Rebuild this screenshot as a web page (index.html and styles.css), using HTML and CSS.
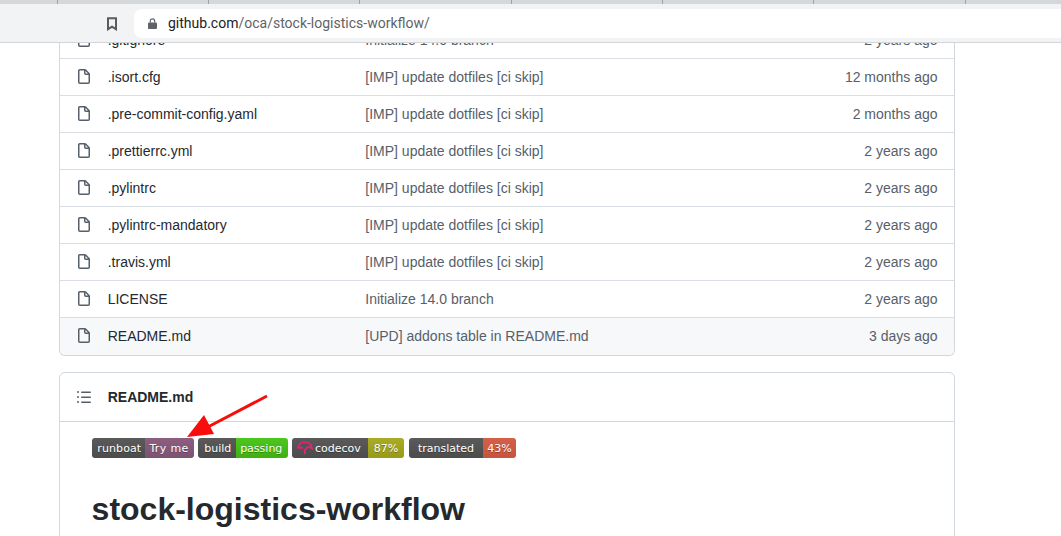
FILE: index.html
```html
<!DOCTYPE html>
<html lang="en">
<head>
<meta charset="utf-8">
<title>oca/stock-logistics-workflow</title>
<link rel="stylesheet" href="styles.css">
</head>
<body>
<svg class="defs" width="0" height="0" aria-hidden="true">
  <symbol id="file" viewBox="0 0 16 16"><path fill="#57606a" fill-rule="evenodd" d="M3.75 1.5a.25.25 0 00-.25.25v11.5c0 .138.112.25.25.25h8.5a.25.25 0 00.25-.25V6H9.75A1.75 1.75 0 018 4.25V1.5H3.75zm5.75.56v2.19c0 .138.112.25.25.25h2.19L9.5 2.06zM2 1.75C2 .784 2.784 0 3.75 0h5.086c.464 0 .909.184 1.237.513l3.414 3.414c.329.328.513.773.513 1.237v8.086A1.75 1.75 0 0112.25 15h-8.5A1.75 1.75 0 012 13.25V1.75z"/></symbol>
</svg>
<div class="tabstrip">
  <span class="tab tab-first"></span><span class="tab"></span><span class="tab"></span><span class="tab"></span><span class="tab"></span><span class="tab"></span><span class="tab"></span>
</div>
<header class="toolbar">
  <svg class="bookmark" width="12" height="14" viewBox="0 0 12 14"><path fill="none" stroke="#5a5c60" stroke-width="2" d="M2 1.2h8v11l-4-2.600-4 2.600z"/></svg>
  <div class="urlbar">
    <svg class="lock" width="9" height="11" viewBox="0 0 10 12"><path fill="#5f6368" d="M1 5h8a1 1 0 011 1v5a1 1 0 01-1 1H1a1 1 0 01-1-1V6a1 1 0 011-1z"/><path fill="none" stroke="#5f6368" stroke-width="1.3" d="M2.600 5V3.200a2.400 2.400 0 014.800 0V5"/></svg>
    <span class="url"><span class="host">github.com</span>/oca/stock-logistics-workflow/</span>
  </div>
</header>
<div class="viewport">
  <main class="content">
    <section class="files">
      <div class="row"><svg class="ficon" width="16" height="16"><use href="#file"/></svg><span class="name">.gitignore</span><span class="msg">Initialize 14.0 branch</span><span class="age">2 years ago</span></div>
      <div class="row"><svg class="ficon" width="16" height="16"><use href="#file"/></svg><span class="name">.isort.cfg</span><span class="msg">[IMP] update dotfiles [ci skip]</span><span class="age">12 months ago</span></div>
      <div class="row"><svg class="ficon" width="16" height="16"><use href="#file"/></svg><span class="name">.pre-commit-config.yaml</span><span class="msg">[IMP] update dotfiles [ci skip]</span><span class="age">2 months ago</span></div>
      <div class="row"><svg class="ficon" width="16" height="16"><use href="#file"/></svg><span class="name">.prettierrc.yml</span><span class="msg">[IMP] update dotfiles [ci skip]</span><span class="age">2 years ago</span></div>
      <div class="row"><svg class="ficon" width="16" height="16"><use href="#file"/></svg><span class="name">.pylintrc</span><span class="msg">[IMP] update dotfiles [ci skip]</span><span class="age">2 years ago</span></div>
      <div class="row"><svg class="ficon" width="16" height="16"><use href="#file"/></svg><span class="name">.pylintrc-mandatory</span><span class="msg">[IMP] update dotfiles [ci skip]</span><span class="age">2 years ago</span></div>
      <div class="row"><svg class="ficon" width="16" height="16"><use href="#file"/></svg><span class="name">.travis.yml</span><span class="msg">[IMP] update dotfiles [ci skip]</span><span class="age">2 years ago</span></div>
      <div class="row"><svg class="ficon" width="16" height="16"><use href="#file"/></svg><span class="name">LICENSE</span><span class="msg">Initialize 14.0 branch</span><span class="age">2 years ago</span></div>
      <div class="row row-hover"><svg class="ficon" width="16" height="16"><use href="#file"/></svg><span class="name">README.md</span><span class="msg">[UPD] addons table in README.md</span><span class="age">3 days ago</span></div>
    </section>
    <section class="readme">
      <div class="readme-head">
        <svg class="list" width="16" height="16" viewBox="0 0 16 16"><path fill="#57606a" fill-rule="evenodd" d="M2 4a1 1 0 100-2 1 1 0 000 2zm3.750-1.500a.750.750 0 000 1.500h8.500a.750.750 0 000-1.500h-8.500zm0 5a.750.750 0 000 1.500h8.500a.750.750 0 000-1.500h-8.500zm0 5a.750.750 0 000 1.500h8.500a.750.750 0 000-1.500h-8.500zM3 8a1 1 0 11-2 0 1 1 0 012 0zm-1 6a1 1 0 100-2 1 1 0 000 2z"/></svg>
        <strong class="readme-title">README.md</strong>
      </div>
      <div class="readme-body">
        <div class="badges">
          <span class="badge"><span class="b-l b-runboat">runboat</span><span class="b-r b-try">Try me</span></span>
          <span class="badge"><span class="b-l b-build">build</span><span class="b-r b-pass">passing</span></span>
          <span class="badge"><span class="b-l b-codecov"><svg class="umbrella" width="16" height="14" viewBox="0 0 16 14"><path fill="none" stroke="#f01f7a" stroke-width="1.7" d="M1 7.400C1.200 3.400 4.300 1 8 1s6.800 2.400 7 6.400c-1.600-1.200-3.500-1.500-5.200-.7-1.200.6-2 2-2 3.600v2.700M1 7.400c1.500-1 3.300-1 4.900-.2"/></svg>codecov</span><span class="b-r b-87">87%</span></span>
          <span class="badge"><span class="b-l b-trans">translated</span><span class="b-r b-43">43%</span></span>
        </div>
        <h1 class="title">stock-logistics-workflow</h1>
      </div>
    </section>
  </main>
  <svg class="arrow" width="90" height="50" viewBox="0 0 90 50"><path fill="none" stroke="#f80d0d" stroke-width="3" d="M81 3L20 35"/><path fill="#f80d0d" d="M1 44l17-22 10 19z"/></svg>
</div>
</body>
</html>
```
FILE: styles.css
```css
* { box-sizing: border-box; }
html, body { margin: 0; padding: 0; }
body {
  width: 1061px;
  height: 536px;
  overflow: hidden;
  background: #fff;
  color: #24292f;
  font-family: "Liberation Sans", Arial, sans-serif;
  font-size: 14px;
  display: flex;
  flex-direction: column;
}
.defs { position: absolute; }

.tabstrip { display: flex; height: 4px; background: #d5d8db; flex: none; }
.tab { width: 151.4px; border-right: 1px solid #9fa2a5; flex: none; }
.tab-first { width: 57.5px; }

.toolbar {
  height: 39px;
  flex: none;
  display: flex;
  align-items: center;
  background: #f1f3f4;
  border-bottom: 1px solid #d3d5d7;
  padding: 1px 0 0 106px;
}
.bookmark { margin-right: 16px; flex: none; }
.urlbar {
  flex: 1;
  height: 29px;
  background: #fff;
  border-radius: 8px 0 0 8px;
  display: flex;
  align-items: center;
  padding-left: 14px;
}
.lock { margin-right: 11px; flex: none; }
.url { font-family: Roboto, sans-serif; font-size: 14px; color: #5f6368; white-space: nowrap; padding-bottom: 2px; }
.host { color: #202124; }

.viewport { flex: 1; overflow: hidden; position: relative; }
.content { margin-top: -21px; padding: 0 106px 0 59px; }

.files {
  border: 1px solid #d0d7de;
  border-top: 0;
  border-radius: 0 0 6px 6px;
  overflow: hidden;
}
.row {
  height: 37px;
  display: flex;
  align-items: center;
  padding: 0 16.5px 0 16px;
  border-bottom: 1px solid #d8dee4;
}
.row:last-child { border-bottom: 0; padding-bottom: 1px; }
.row-hover { background: #f6f8fa; }
.ficon { flex: none; margin-right: 15.7px; }
.name { width: 257.6px; flex: none; white-space: nowrap; }
.msg { flex: 1; color: #57606a; white-space: nowrap; }
.age { color: #57606a; white-space: nowrap; }

.readme {
  margin-top: 16px;
  border: 1px solid #d0d7de;
  border-radius: 6px;
}
.readme-head {
  height: 49px;
  display: flex;
  align-items: center;
  padding-left: 16px;
  border-bottom: 1px solid #d0d7de;
}
.list { margin-right: 15.7px; flex: none; }
.readme-title { font-weight: 700; }
.readme-body { padding: 16px 32px; }

.badges { display: flex; gap: 4px; height: 20px; }
.badge {
  display: flex;
  height: 20px;
  border-radius: 3px;
  overflow: hidden;
  color: #fff;
  font-family: "DejaVu Sans", Verdana, sans-serif;
  font-size: 11px;
  line-height: 20px;
  white-space: nowrap;
}
.b-l, .b-r { display: flex; align-items: center; justify-content: center; padding-top: 1px; text-shadow: 0 1px 0 rgba(1,1,1,.3); }
.b-l { background: linear-gradient(#5a5a5a, #4c4c4c); }
.b-runboat { width: 53px; padding-left: 1.5px; letter-spacing: .1px; }
.b-try { width: 49px; padding-right: 1px; letter-spacing: .35px; background: linear-gradient(#8c5f80, #7c5171); }
.b-build { width: 38px; padding-left: 1.5px; }
.b-pass { width: 52px; padding-right: 1.5px; background: linear-gradient(#4cc71f, #3fb00f); }
.b-codecov { width: 76px; padding-left: 5px; justify-content: flex-start; }
.umbrella { margin: -1px 2px 0 0; flex: none; }
.b-87 { width: 36px; background: linear-gradient(#aaac27, #989a18); }
.b-trans { width: 74px; margin-left: 1px; border-radius: 3px 0 0 3px; }
.b-43 { width: 33px; background: linear-gradient(#d5604a, #c8533c); }

.title {
  margin: 31px 0 0 -0.4px;
  font-size: 32px;
  line-height: 40px;
  font-weight: 700;
}

.arrow { position: absolute; left: 186px; top: 350px; }
```
